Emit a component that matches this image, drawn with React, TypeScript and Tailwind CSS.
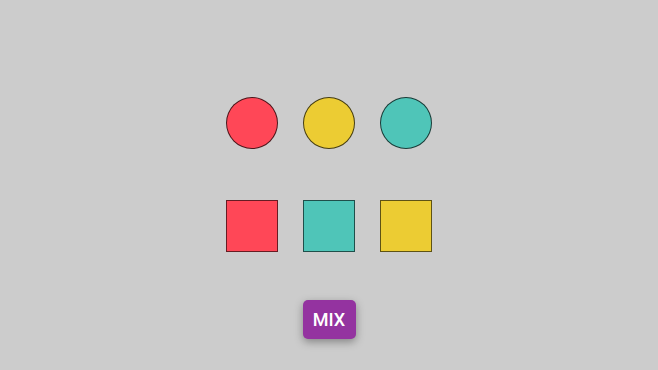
const circles = ['#ff4757', '#eccc33', '#4fc5b8'];
const squares = ['#ff4757', '#4fc5b8', '#eccc33'];

export default function App() {
  return (
    <div className="w-[658px] h-[370px] bg-[#cccccc] flex flex-col items-center pt-[97px] font-['Roboto',sans-serif]">
      <div className="flex gap-[25px]">
        {circles.map((c, i) => (
          <div key={i} className="w-[52px] h-[52px] rounded-full border border-black/70" style={{ backgroundColor: c }} />
        ))}
      </div>
      <div className="flex gap-[25px] mt-[51px]">
        {squares.map((c, i) => (
          <div key={i} className="w-[52px] h-[52px] border border-black/60" style={{ backgroundColor: c }} />
        ))}
      </div>
      <button className="mt-[48px] w-[53px] h-[39px] rounded-[5px] bg-[#9433a0] text-white text-[18px] font-medium leading-none shadow-[0_3px_8px_rgba(0,0,0,0.35)]">
        MIX
      </button>
    </div>
  );
}
